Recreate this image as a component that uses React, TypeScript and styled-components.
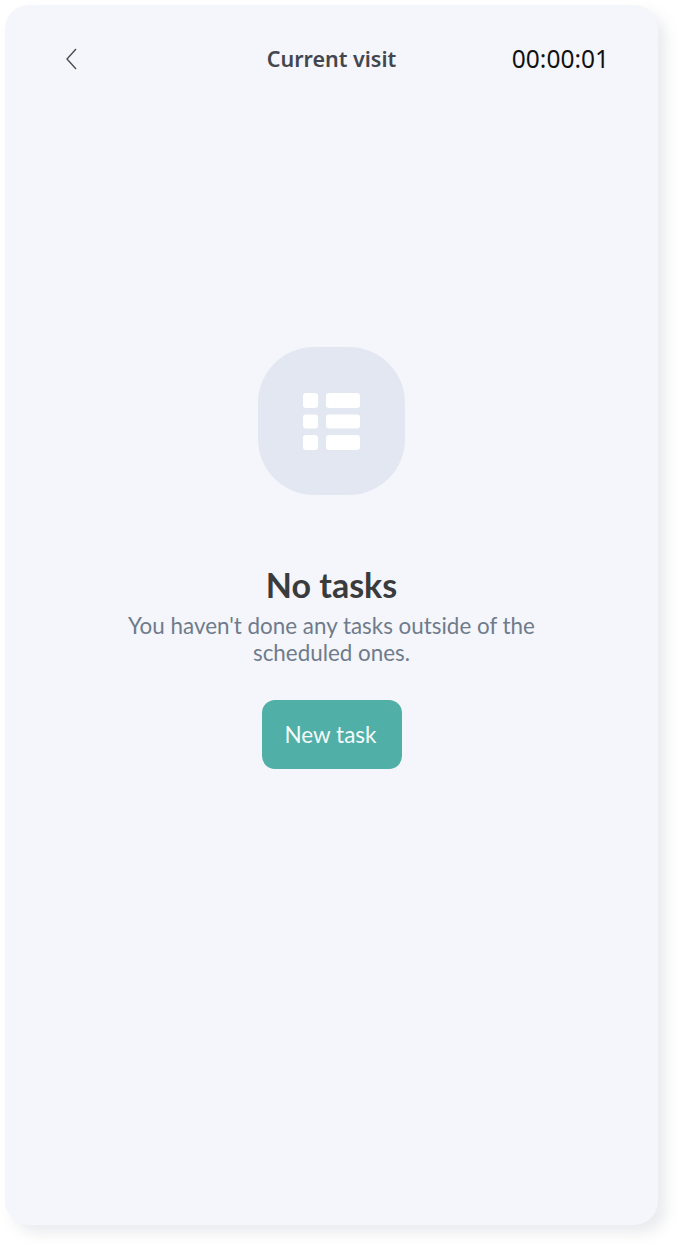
import React from 'react';
import styled, {createGlobalStyle} from 'styled-components';

const GlobalStyle = createGlobalStyle`
  html, body {
    margin: 0;
    padding: 0;
    background: #fff;
  }
`;

const Page = styled.div`
  width: 683px;
  height: 1250px;
  padding: 5px 0 0 5px;
  box-sizing: border-box;
  overflow: hidden;
`;

const Card = styled.div`
  width: 653px;
  height: 1220px;
  box-sizing: border-box;
  background: #f4f6fb;
  border-radius: 24px;
  box-shadow: 8px 8px 14px rgba(90, 100, 125, 0.13);
  display: flex;
  flex-direction: column;
`;

const Header = styled.header`
  height: 108px;
  padding: 0 50px;
  box-sizing: border-box;
  display: grid;
  grid-template-columns: 1fr auto 1fr;
  align-items: center;
`;

const BackButton = styled.button`
  width: 16px;
  height: 24px;
  margin-left: 9px;
  padding: 0;
  border: 0;
  background: none;
  display: flex;
`;

const Title = styled.h1`
  margin: 0;
  font: 600 21.5px/30px "Noto Sans", sans-serif;
  color: #43474d;
`;

const Timer = styled.span`
  justify-self: end;
  margin-right: -1px;
  font: 400 24.5px/30px "Noto Sans", sans-serif;
  color: #111;
`;

const Empty = styled.main`
  margin-top: 234px;
  display: flex;
  flex-direction: column;
  align-items: center;
`;

const IconTile = styled.div`
  width: 147px;
  height: 148px;
  border-radius: 56px;
  background: #e3e7f1;
  display: flex;
  align-items: center;
  justify-content: center;
`;

const Heading = styled.h2`
  margin: 70px 0 0;
  font: 700 34px/40px Lato, sans-serif;
  color: #3a3b3d;
`;

const Description = styled.p`
  margin: 7px 0 0;
  width: 440px;
  text-align: center;
  font: 400 22.4px/27px Lato, sans-serif;
  color: #6f7b8b;
`;

const NewTaskButton = styled.button`
  margin-top: 34px;
  width: 140px;
  height: 69px;
  padding: 0 2px 0 0;
  border: 0;
  border-radius: 13px;
  background: #50afa7;
  color: #f7fbfb;
  font: 400 22.5px/30px Lato, sans-serif;
`;

const ListIcon = () => (
  <svg width="57" height="57" viewBox="0 0 57 57" fill="#fff">
    <rect x="0" y="0" width="15" height="15" rx="3" />
    <rect x="23" y="0" width="34" height="15" rx="3" />
    <rect x="0" y="21.5" width="15" height="14" rx="3" />
    <rect x="23" y="21.5" width="34" height="14" rx="3" />
    <rect x="0" y="42" width="15" height="15" rx="3" />
    <rect x="23" y="42" width="34" height="15" rx="3" />
  </svg>
);

function App() {
  return (
    <Page>
      <GlobalStyle />
      <Card>
        <Header>
          <BackButton aria-label="Back">
            <svg width="16" height="24" viewBox="0 0 16 24" fill="none" stroke="#4a4d52" strokeWidth="1.4">
              <path d="M12 2 L3 12 L12 22" />
            </svg>
          </BackButton>
          <Title>Current visit</Title>
          <Timer>00:00:01</Timer>
        </Header>
        <Empty>
          <IconTile>
            <ListIcon />
          </IconTile>
          <Heading>No tasks</Heading>
          <Description>You haven't done any tasks outside of the scheduled ones.</Description>
          <NewTaskButton>New task</NewTaskButton>
        </Empty>
      </Card>
    </Page>
  );
}

export default App;
